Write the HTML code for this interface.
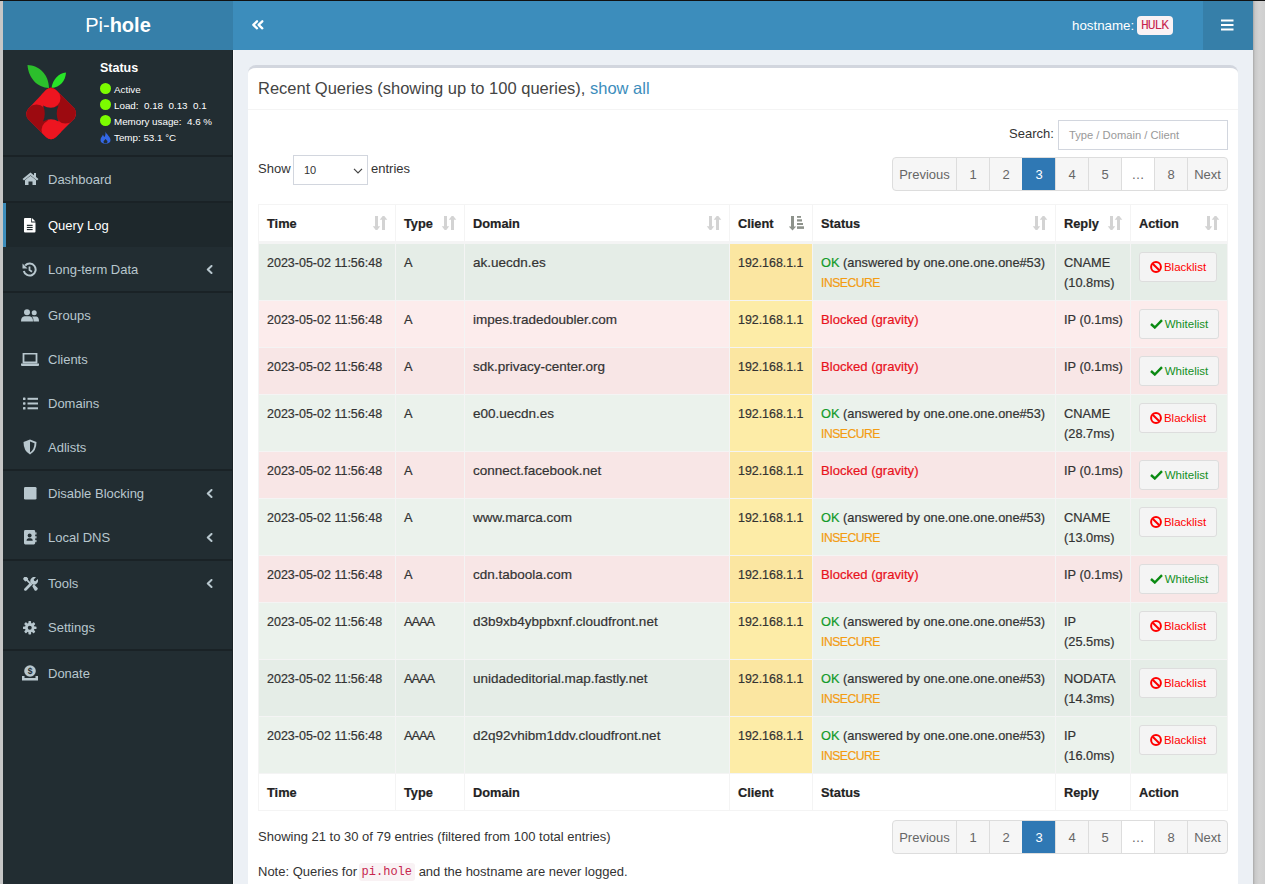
<!DOCTYPE html>
<html><head><meta charset="utf-8">
<style>
*{box-sizing:border-box;margin:0;padding:0}
html,body{width:1265px;height:884px;overflow:hidden}
body{position:relative;background:#ecf0f5;font-family:"Liberation Sans",sans-serif;color:#333;font-size:13px}
.abs{position:absolute}
svg{display:block}
#topline{left:0;top:0;width:1265px;height:1px;background:#111}
#lstrip{left:0;top:1px;width:3px;height:883px;background:#c6c6c6}
#rstrip{left:1253px;top:1px;width:12px;height:883px;background:linear-gradient(90deg,#a9a9a9 0,#c8c8c8 2px,#d3d3d3 6px,#cfcfcf 12px)}
#logo{left:3px;top:1px;width:230px;height:49px;background:#367fa9;color:#fff;text-align:center;font-size:20px;line-height:49px}
#navbar{left:233px;top:1px;width:970px;height:49px;background:#3c8dbc}
#burger{left:1203px;top:1px;width:50px;height:49px;background:#367fa9}
#sidebar{left:3px;top:50px;width:230px;height:834px;background:#222d32;border-right:1px solid #1a2226}
#cwhite{left:233px;top:50px;width:1px;height:834px;background:#f7f9fb}
#host{left:1072px;top:1px;height:49px;line-height:49px;color:#fff;font-size:13.3px}
#hulk{left:1137px;top:16px;width:36px;height:19px;background:#f9f2f4;border-radius:4px;color:#c7254e;font-family:"Liberation Mono",monospace;font-size:13px;letter-spacing:-1px;text-indent:-1px;line-height:19px;text-align:center}
/* sidebar */
.sep{left:3px;width:229px;height:2px;background:#1a2226}
.item{left:3px;width:229px;height:44px;color:#b8c7ce;font-size:13px;line-height:44px}
.item .t{position:absolute;left:45px;top:1px}
.item .ic{position:absolute;left:18px;top:14px;width:16px;height:16px}
.item .ch{position:absolute;left:202px;top:17px}
.item.active{background:#1e282c;color:#fff}
.item.active:before{content:"";position:absolute;left:0;top:0;width:3px;height:44px;background:#3c8dbc}
#status{left:100px;top:58px;color:#fff}
#status .h{font-weight:bold;font-size:13.5px;position:absolute;left:0;top:0;line-height:18px}
#status .l{position:absolute;left:0;font-size:10px;line-height:14px;white-space:pre}
#status .dot{display:inline-block;width:11px;height:11px;border-radius:50%;background:#7cfc00;vertical-align:-2px;margin-right:2px}
/* box */
#box{left:248px;top:65px;width:990px;height:830px;background:#fff;border-top:3px solid #d2d6de;border-radius:8px 8px 0 0}
#boxhdr{left:248px;top:68px;width:990px;height:42px;border-bottom:1px solid #f4f4f4}
#title{left:258px;top:77px;font-size:16.5px;line-height:22px;color:#444;white-space:nowrap}
#title a{color:#3c8dbc;text-decoration:none}
.lbl{font-size:13px;white-space:nowrap}
#search{left:1058px;top:120px;width:170px;height:30px;border:1px solid #d2d6de;color:#999;font-size:11.2px;line-height:28px;padding-left:10px}
.pag{height:34px;display:flex;border:1px solid #ddd;border-radius:4px;overflow:hidden;background:#f6f6f6}
.pag div{height:32px;line-height:34px;text-align:center;color:#666;font-size:13px;border-left:1px solid #ddd}
.pag div:first-child{border-left:0}
.pag div.cur{background:#2f78b4;color:#fff;border-left-color:#2f78b4}
.pag div.ell{background:#fff}
#sel{left:293px;top:155px;width:75px;height:30px;border:1px solid #d2d6de;font-size:11px;line-height:28px;padding-left:10px;color:#333}
/* table */
table{position:absolute;left:258px;top:204px;width:969px;-webkit-text-stroke:0.2px;border-collapse:collapse;table-layout:fixed;font-size:12.8px;line-height:20px}
th,td{border:1px solid #f4f4f4;padding:9px 8px 7px;vertical-align:top;text-align:left;white-space:nowrap;overflow:hidden}
thead th{border-bottom:3px solid #f4f4f4;font-weight:bold;color:#222;position:relative}
tfoot th{border-top:1px solid #f4f4f4;font-weight:bold;color:#222;padding-top:9px;padding-bottom:7px}
tr.ok td{background:#ebf2ec}
tr.bl td{background:#fcecec}
tr.bl.odd td{background:#f8e6e6}
tr.ok.odd td{background:#e5ede7}
td.cl{background:#fdeca7 !important}
tr.odd td.cl{background:#fbe6a1 !important}
.g{color:#129a2a}.r{color:#e8121c;font-size:13.1px}.o{color:#f39c12}
.btn{position:absolute;width:77px;height:30px;border:1px solid #ddd;border-radius:3px;background:#f4f4f4;font-size:11.5px;line-height:28px;text-align:center}
.btn.bk{color:#f00}.btn.wl{color:#14901e}
tbody td:nth-child(1){font-size:12.5px}tbody td:nth-child(2){letter-spacing:-1px}tbody td:nth-child(3){font-size:13.5px}td.cl{font-size:12.4px}.o{font-size:12.2px;letter-spacing:-0.5px}
.sort{position:absolute;right:7px;top:11px}
</style></head><body>
<div id="topline" class="abs"></div>
<div id="lstrip" class="abs"></div>
<div id="rstrip" class="abs"></div>
<div id="logo" class="abs">Pi-<b>hole</b></div>
<div id="navbar" class="abs"></div>
<div id="burger" class="abs"></div>
<div id="sidebar" class="abs"></div>
<div id="cwhite" class="abs"></div>

<!-- header content -->
<svg class="abs" style="left:251px;top:19px" width="13" height="12" viewBox="0 0 13 12"><path d="M6 2.3 L2.3 5.8 L6 9.3 M11.3 2.3 L7.6 5.8 L11.3 9.3" fill="none" stroke="#fff" stroke-width="2.3" stroke-linecap="round" stroke-linejoin="round"/></svg>
<div id="host" class="abs">hostname:</div>
<div id="hulk" class="abs">HULK</div>
<svg class="abs" style="left:1221px;top:19px" width="12.5" height="12" viewBox="0 0 13 12" preserveAspectRatio="none"><rect x="0" y="0.5" width="13" height="2" fill="#fff"/><rect x="0" y="5" width="13" height="2" fill="#fff"/><rect x="0" y="9.5" width="13" height="2" fill="#fff"/></svg>


<div class="abs sep" style="top:155px"></div>
<svg class="abs" style="left:26px;top:65px" width="51" height="76" viewBox="0 0 51 76">
<defs><clipPath id="dm"><path d="M25 22.5 Q27.5 22.5 30 25 L48.5 43.5 Q51.5 48.5 48.5 53.5 L30 72 Q25 76.5 20 72 L2 54 Q-1.5 49 2 44 L20 25 Q22.5 22.5 25 22.5 Z"/></clipPath></defs>
<path d="M1.5 0 C13 0.5 22.5 9 23 23 C11 22.5 2.5 13 1.5 0 Z" fill="#2cbf2c"/>
<path d="M25.5 23 C26.5 15 32.5 8 40 7.5 C39.5 16 34 22.5 25.5 23 Z" fill="#28e428"/>
<g clip-path="url(#dm)">
<rect x="-2" y="20" width="56" height="60" fill="#ed1520"/>
<path d="M0 50 A10.5 10.5 0 0 1 21 50 Q21.5 62 31 73 L20 82 L-6 56 Z" fill="#9c0a10"/>
<path d="M50 48 A10.5 10.5 0 0 1 29 48 Q28.5 36 19 25 L30 16 L56 42 Z" fill="#9c0a10"/>
<circle cx="24.5" cy="33" r="10" fill="#ed1520"/>
<circle cx="25.5" cy="65" r="10" fill="#ed1520"/>
</g>
<path d="M17 40.5 Q25 45 32.5 40.5 Q29 48.5 32.5 56.5 Q25 52 17 56.5 Q20.5 48.5 17 40.5 Z" fill="#222d32"/>
</svg>
<div class="abs" style="left:100px;top:59px;color:#fff;font-weight:bold;font-size:12.5px;line-height:18px">Status</div>
<div class="abs" style="left:100px;top:83px;width:11px;height:11px;border-radius:50%;background:#7cfc00"></div>
<div class="abs" style="left:100px;top:99px;width:11px;height:11px;border-radius:50%;background:#7cfc00"></div>
<div class="abs" style="left:100px;top:115px;width:11px;height:11px;border-radius:50%;background:#7cfc00"></div>
<svg class="abs" style="left:100px;top:131px" width="11" height="13" viewBox="0 0 11 13"><path d="M5.5 0.5 C6 3 10.5 5.5 10.5 9 C10.5 11.5 8.5 12.8 5.5 12.8 C2.5 12.8 0.5 11.5 0.5 9 C0.5 6.5 2.5 5 3 3.5 C3.5 5 4 6 4.5 6 C5.5 4.5 5.5 2.5 5.5 0.5 Z" fill="#3367e6"/><path d="M5.5 8 C6.5 9 7.5 9.8 7.5 10.8 C7.5 11.8 6.5 12.3 5.5 12.3 C4.5 12.3 3.5 11.8 3.5 10.8 C3.5 9.8 4.8 9 5.5 8 Z" fill="#222d32"/></svg>
<div class="abs" style="left:114px;top:81.5px;color:#fff;font-size:9.8px;line-height:16px;white-space:pre">Active</div>
<div class="abs" style="left:114px;top:97.5px;color:#fff;font-size:9.8px;line-height:16px;white-space:pre">Load:  0.18  0.13  0.1</div>
<div class="abs" style="left:114px;top:113.5px;color:#fff;font-size:9.8px;line-height:16px;white-space:pre">Memory usage:  4.6 %</div>
<div class="abs" style="left:114px;top:129.5px;color:#fff;font-size:9.8px;line-height:16px;white-space:pre">Temp: 53.1 °C</div>
<div class="abs item" style="top:157px"><span class="t">Dashboard</span></div>
<div class="abs" style="left:22px;top:172px"><svg width="17" height="13" viewBox="0 0 17 13"><path d="M8.5 0.5 L0.5 7 L2 8.5 L8.5 3.2 L15 8.5 L16.5 7 Z" fill="#b8c7ce"/><path d="M3 8 L8.5 3.8 L14 8 L14 13 L10.5 13 L10.5 9.5 L6.5 9.5 L6.5 13 L3 13 Z" fill="#b8c7ce"/><rect x="12" y="1" width="2" height="4" fill="#b8c7ce"/></svg></div>
<div class="abs item active" style="top:203px"><span class="t">Query Log</span></div>
<div class="abs" style="left:24px;top:218px"><svg width="11.5" height="14.5" viewBox="0 0 12 15"><path d="M0 1 Q0 0 1 0 L7.5 0 L7.5 4.5 L12 4.5 L12 14 Q12 15 11 15 L1 15 Q0 15 0 14 Z" fill="#fff"/><path d="M8.3 0 L12 3.7 L8.3 3.7 Z" fill="#fff"/><rect x="3" y="7" width="6" height="1.2" fill="#1e282c"/><rect x="3" y="9.2" width="6" height="1.2" fill="#1e282c"/><rect x="3" y="11.4" width="6" height="1.2" fill="#1e282c"/></svg></div>
<div class="abs item" style="top:247px"><span class="t">Long-term Data</span></div>
<div class="abs" style="left:22px;top:262px"><svg width="15" height="15" viewBox="0 0 15 15"><path d="M3.2 3.5 A6 6 0 1 1 1.8 9" fill="none" stroke="#b8c7ce" stroke-width="2"/><path d="M0.5 1.5 L0.5 6.5 L5.5 6.5 Z" fill="#b8c7ce"/><path d="M7.5 4.5 L7.5 8 L10 9.8" fill="none" stroke="#b8c7ce" stroke-width="1.8"/></svg></div>
<svg class="abs" style="left:206px;top:265px" width="7" height="9" viewBox="0 0 7 9"><path d="M5.5 1 L1.8 4.5 L5.5 8" fill="none" stroke="#b8c7ce" stroke-width="2" stroke-linecap="round" stroke-linejoin="round"/></svg>
<div class="abs item" style="top:293px"><span class="t">Groups</span></div>
<div class="abs" style="left:21px;top:309px"><svg width="18" height="13" viewBox="0 0 18 13"><circle cx="6" cy="3.2" r="3" fill="#b8c7ce"/><path d="M0 12.5 Q0 7.5 3.5 7.2 L8.5 7.2 Q12 7.5 12 12.5 Z" fill="#b8c7ce"/><circle cx="13.2" cy="3.8" r="2.5" fill="#b8c7ce"/><path d="M12.5 12.5 Q12.8 9 11 7.6 L15.5 7.6 Q18 8 18 12.5 Z" fill="#b8c7ce"/></svg></div>
<div class="abs item" style="top:337px"><span class="t">Clients</span></div>
<div class="abs" style="left:21px;top:353px"><svg width="18" height="13" viewBox="0 0 18 13"><path d="M2.5 0.5 L15.5 0.5 L15.5 9.5 L2.5 9.5 Z" fill="none" stroke="#b8c7ce" stroke-width="1.8"/><path d="M0 10.5 L18 10.5 L18 12 Q18 13 17 13 L1 13 Q0 13 0 12 Z" fill="#b8c7ce"/></svg></div>
<div class="abs item" style="top:381px"><span class="t">Domains</span></div>
<div class="abs" style="left:23px;top:397px"><svg width="15" height="13" viewBox="0 0 15 13"><rect x="0" y="0.5" width="2.5" height="2.5" rx="0.6" fill="#b8c7ce"/><rect x="0" y="5.2" width="2.5" height="2.5" rx="0.6" fill="#b8c7ce"/><rect x="0" y="10" width="2.5" height="2.5" rx="0.6" fill="#b8c7ce"/><rect x="4.5" y="0.8" width="10.5" height="2" fill="#b8c7ce"/><rect x="4.5" y="5.5" width="10.5" height="2" fill="#b8c7ce"/><rect x="4.5" y="10.3" width="10.5" height="2" fill="#b8c7ce"/></svg></div>
<div class="abs item" style="top:425px"><span class="t">Adlists</span></div>
<div class="abs" style="left:23px;top:439px"><svg width="14" height="16" viewBox="0 0 14 16"><path d="M7 0.5 L13.5 3 Q13.5 12 7 15.5 Q0.5 12 0.5 3 Z" fill="#b8c7ce"/><path d="M7 2.5 L11.5 4.3 Q11.3 11 7 13.4 Z" fill="#222d32"/></svg></div>
<div class="abs item" style="top:471px"><span class="t">Disable Blocking</span></div>
<div class="abs" style="left:24px;top:487px"><svg width="12.5" height="12.5" viewBox="0 0 14 14"><rect x="0" y="0" width="14" height="14" rx="1.5" fill="#b8c7ce"/></svg></div>
<svg class="abs" style="left:206px;top:489px" width="7" height="9" viewBox="0 0 7 9"><path d="M5.5 1 L1.8 4.5 L5.5 8" fill="none" stroke="#b8c7ce" stroke-width="2" stroke-linecap="round" stroke-linejoin="round"/></svg>
<div class="abs item" style="top:515px"><span class="t">Local DNS</span></div>
<div class="abs" style="left:24px;top:530px"><svg width="12.5" height="14.5" viewBox="0 0 14 16"><path d="M0 1.5 Q0 0 1.5 0 L11 0 Q12.5 0 12.5 1.5 L12.5 14.5 Q12.5 16 11 16 L1.5 16 Q0 16 0 14.5 Z" fill="#b8c7ce"/><rect x="12.5" y="2.5" width="1.5" height="2.5" fill="#b8c7ce"/><rect x="12.5" y="6.8" width="1.5" height="2.5" fill="#b8c7ce"/><rect x="12.5" y="11" width="1.5" height="2.5" fill="#b8c7ce"/><circle cx="6.3" cy="6" r="2.2" fill="#222d32"/><path d="M2.8 12 Q2.8 9 5 9 L7.6 9 Q9.8 9 9.8 12 Z" fill="#222d32"/></svg></div>
<svg class="abs" style="left:206px;top:533px" width="7" height="9" viewBox="0 0 7 9"><path d="M5.5 1 L1.8 4.5 L5.5 8" fill="none" stroke="#b8c7ce" stroke-width="2" stroke-linecap="round" stroke-linejoin="round"/></svg>
<div class="abs item" style="top:561px"><span class="t">Tools</span></div>
<div class="abs" style="left:23px;top:577px"><svg width="15" height="14" viewBox="0 0 15 14"><path d="M1 0.2 L0 2 L2.2 4.4 L3.6 4.1 L8 8.5 L9.3 7.2 L4.9 2.8 L5.2 1.4 L2.8 -0.8 Z" fill="#b8c7ce"/><path d="M9.2 8.9 L10.9 7.2 L14.4 10.7 Q15.2 11.7 14.4 12.6 L13.5 13.4 Q12.6 14.2 11.7 13.4 Z" fill="#b8c7ce"/><path d="M1.5 13.4 Q0.6 12.5 1.5 11.5 L7.4 5.6 L9.3 7.5 L3.4 13.4 Q2.4 14.3 1.5 13.4 Z" fill="#b8c7ce"/><path d="M7.6 5.6 A4.1 4.1 0 0 1 12.9 0.2 L10.7 2.4 L11.1 3.8 L12.5 4.2 L14.7 2 A4.1 4.1 0 0 1 9.3 7.3 Z" fill="#b8c7ce"/></svg></div>
<svg class="abs" style="left:206px;top:579px" width="7" height="9" viewBox="0 0 7 9"><path d="M5.5 1 L1.8 4.5 L5.5 8" fill="none" stroke="#b8c7ce" stroke-width="2" stroke-linecap="round" stroke-linejoin="round"/></svg>
<div class="abs item" style="top:605px"><span class="t">Settings</span></div>
<div class="abs" style="left:23px;top:621px"><svg width="13.5" height="13.5" viewBox="0 0 15 15"><g fill="#b8c7ce"><circle cx="7.5" cy="7.5" r="5.3"/><rect x="6" y="0" width="3" height="15" rx="0.8"/><rect x="0" y="6" width="15" height="3" rx="0.8"/><rect x="6" y="0" width="3" height="15" rx="0.8" transform="rotate(45 7.5 7.5)"/><rect x="6" y="0" width="3" height="15" rx="0.8" transform="rotate(-45 7.5 7.5)"/></g><circle cx="7.5" cy="7.5" r="2.2" fill="#222d32"/></svg></div>
<div class="abs item" style="top:651px"><span class="t">Donate</span></div>
<div class="abs" style="left:22px;top:665px"><svg width="16" height="16" viewBox="0 0 16 16"><circle cx="8" cy="6" r="5.8" fill="#b8c7ce"/><text x="8" y="9.2" font-size="8.5" font-family="Liberation Sans" font-weight="bold" text-anchor="middle" fill="#222d32">$</text><path d="M0 11 L2.5 11 L2.5 13 L13.5 13 L13.5 11 L16 11 L16 15.5 L0 15.5 Z" fill="#b8c7ce"/></svg></div>
<div class="abs sep" style="top:201px"></div>
<div class="abs sep" style="top:291px"></div>
<div class="abs sep" style="top:469px"></div>
<div class="abs sep" style="top:559px"></div>
<div class="abs sep" style="top:649px"></div>



<div id="box" class="abs"></div>
<div id="boxhdr" class="abs"></div>
<div id="title" class="abs">Recent Queries (showing up to 100 queries), <a>show all</a></div>
<div class="abs lbl" style="left:1009px;top:124px;line-height:20px">Search:</div>
<div id="search" class="abs">Type / Domain / Client</div>
<div class="abs lbl" style="left:258px;top:159px;line-height:20px">Show</div>
<div id="sel" class="abs">10<svg class="abs" style="left:59px;top:12px" width="10" height="6" viewBox="0 0 10 6"><path d="M1 0.8 L5 4.8 L9 0.8" fill="none" stroke="#444" stroke-width="1.2"/></svg></div>
<div class="abs lbl" style="left:371px;top:159px;line-height:20px">entries</div>
<div class="abs pag" style="left:892px;top:157px;width:336px"><div class="" style="width:63px">Previous</div><div class="" style="width:33px">1</div><div class="" style="width:33px">2</div><div class="cur" style="width:33px">3</div><div class="" style="width:33px">4</div><div class="" style="width:33px">5</div><div class="ell" style="width:33px">…</div><div class="" style="width:33px">8</div><div class="" style="width:40px">Next</div></div>
<table>
<colgroup><col style="width:137px"><col style="width:69px"><col style="width:265px"><col style="width:83px"><col style="width:243px"><col style="width:75px"><col style="width:97px"></colgroup>
<thead><tr style="height:38px"><th>Time <svg class="sort" width="16" height="15" viewBox="0 0 16 15"><path d="M3 0 H6 V10.2 H8.2 L5.3 14 H3.7 L0.8 10.2 H3 Z" fill="#d3d3d3"/><path d="M10 14 H13 V3.8 H15.3 L12.3 0 H10.7 L7.7 3.8 H10 Z" fill="#d3d3d3"/></svg></th><th>Type <svg class="sort" width="16" height="15" viewBox="0 0 16 15"><path d="M3 0 H6 V10.2 H8.2 L5.3 14 H3.7 L0.8 10.2 H3 Z" fill="#d3d3d3"/><path d="M10 14 H13 V3.8 H15.3 L12.3 0 H10.7 L7.7 3.8 H10 Z" fill="#d3d3d3"/></svg></th><th>Domain <svg class="sort" width="16" height="15" viewBox="0 0 16 15"><path d="M3 0 H6 V10.2 H8.2 L5.3 14 H3.7 L0.8 10.2 H3 Z" fill="#d3d3d3"/><path d="M10 14 H13 V3.8 H15.3 L12.3 0 H10.7 L7.7 3.8 H10 Z" fill="#d3d3d3"/></svg></th><th>Client <svg class="sort" width="16" height="15" viewBox="0 0 16 15"><path d="M2 0 L5 0 L5 10.5 L7.2 10.5 L3.5 14.5 L-0.2 10.5 L2 10.5 Z" fill="#8d928b"/><rect x="8" y="0" width="4" height="1.8" fill="#8d928b"/><rect x="8" y="3.3" width="5" height="2.2" fill="#8d928b"/><rect x="8" y="7" width="6" height="2" fill="#8d928b"/><rect x="8" y="10.3" width="7" height="2.6" fill="#8d928b"/></svg></th><th>Status <svg class="sort" width="16" height="15" viewBox="0 0 16 15"><path d="M3 0 H6 V10.2 H8.2 L5.3 14 H3.7 L0.8 10.2 H3 Z" fill="#d3d3d3"/><path d="M10 14 H13 V3.8 H15.3 L12.3 0 H10.7 L7.7 3.8 H10 Z" fill="#d3d3d3"/></svg></th><th>Reply <svg class="sort" width="16" height="15" viewBox="0 0 16 15"><path d="M3 0 H6 V10.2 H8.2 L5.3 14 H3.7 L0.8 10.2 H3 Z" fill="#d3d3d3"/><path d="M10 14 H13 V3.8 H15.3 L12.3 0 H10.7 L7.7 3.8 H10 Z" fill="#d3d3d3"/></svg></th><th>Action <svg class="sort" width="16" height="15" viewBox="0 0 16 15"><path d="M3 0 H6 V10.2 H8.2 L5.3 14 H3.7 L0.8 10.2 H3 Z" fill="#d3d3d3"/><path d="M10 14 H13 V3.8 H15.3 L12.3 0 H10.7 L7.7 3.8 H10 Z" fill="#d3d3d3"/></svg></th></tr></thead>
<tbody>
<tr class="ok odd" style="height:57px"><td>2023-05-02 11:56:48</td><td>A</td><td>ak.uecdn.es</td><td class="cl">192.168.1.1</td><td><span class="g">OK</span> (answered by one.one.one.one#53)<br><span class="o">INSECURE</span></td><td>CNAME<br>(10.8ms)</td><td></td></tr>
<tr class="bl" style="height:47px"><td>2023-05-02 11:56:48</td><td>A</td><td>impes.tradedoubler.com</td><td class="cl">192.168.1.1</td><td><span class="r">Blocked (gravity)</span></td><td>IP (0.1ms)</td><td></td></tr>
<tr class="bl odd" style="height:47px"><td>2023-05-02 11:56:48</td><td>A</td><td>sdk.privacy-center.org</td><td class="cl">192.168.1.1</td><td><span class="r">Blocked (gravity)</span></td><td>IP (0.1ms)</td><td></td></tr>
<tr class="ok" style="height:57px"><td>2023-05-02 11:56:48</td><td>A</td><td>e00.uecdn.es</td><td class="cl">192.168.1.1</td><td><span class="g">OK</span> (answered by one.one.one.one#53)<br><span class="o">INSECURE</span></td><td>CNAME<br>(28.7ms)</td><td></td></tr>
<tr class="bl odd" style="height:47px"><td>2023-05-02 11:56:48</td><td>A</td><td>connect.facebook.net</td><td class="cl">192.168.1.1</td><td><span class="r">Blocked (gravity)</span></td><td>IP (0.1ms)</td><td></td></tr>
<tr class="ok" style="height:57px"><td>2023-05-02 11:56:48</td><td>A</td><td>www.marca.com</td><td class="cl">192.168.1.1</td><td><span class="g">OK</span> (answered by one.one.one.one#53)<br><span class="o">INSECURE</span></td><td>CNAME<br>(13.0ms)</td><td></td></tr>
<tr class="bl odd" style="height:47px"><td>2023-05-02 11:56:48</td><td>A</td><td>cdn.taboola.com</td><td class="cl">192.168.1.1</td><td><span class="r">Blocked (gravity)</span></td><td>IP (0.1ms)</td><td></td></tr>
<tr class="ok" style="height:57px"><td>2023-05-02 11:56:48</td><td>AAAA</td><td>d3b9xb4ybpbxnf.cloudfront.net</td><td class="cl">192.168.1.1</td><td><span class="g">OK</span> (answered by one.one.one.one#53)<br><span class="o">INSECURE</span></td><td>IP<br>(25.5ms)</td><td></td></tr>
<tr class="ok odd" style="height:57px"><td>2023-05-02 11:56:48</td><td>AAAA</td><td>unidadeditorial.map.fastly.net</td><td class="cl">192.168.1.1</td><td><span class="g">OK</span> (answered by one.one.one.one#53)<br><span class="o">INSECURE</span></td><td>NODATA<br>(14.3ms)</td><td></td></tr>
<tr class="ok" style="height:57px"><td>2023-05-02 11:56:48</td><td>AAAA</td><td>d2q92vhibm1ddv.cloudfront.net</td><td class="cl">192.168.1.1</td><td><span class="g">OK</span> (answered by one.one.one.one#53)<br><span class="o">INSECURE</span></td><td>IP<br>(16.0ms)</td><td></td></tr>

</tbody>
<tfoot><tr style="height:37px"><th>Time</th><th>Type</th><th>Domain</th><th>Client</th><th>Status</th><th>Reply</th><th>Action</th></tr></tfoot>
</table>
<div class="abs btn bk" style="width:78px;left:1139px;top:252px"><svg style="display:inline-block;vertical-align:-2px;margin-right:2px" width="12" height="12" viewBox="0 0 12 12"><circle cx="6" cy="6" r="4.9" fill="none" stroke="#f00" stroke-width="2"/><path d="M2.7 2.7 L9.3 9.3" stroke="#f00" stroke-width="2"/></svg>Blacklist</div>
<div class="abs btn wl" style="width:80px;left:1139px;top:309px"><svg style="display:inline-block;vertical-align:-1px;margin-right:2px" width="13" height="10" viewBox="0 0 13 10"><path d="M1 5 L4.8 8.5 L12 1.2" fill="none" stroke="#0a8a12" stroke-width="2.4"/></svg>Whitelist</div>
<div class="abs btn wl" style="width:80px;left:1139px;top:356px"><svg style="display:inline-block;vertical-align:-1px;margin-right:2px" width="13" height="10" viewBox="0 0 13 10"><path d="M1 5 L4.8 8.5 L12 1.2" fill="none" stroke="#0a8a12" stroke-width="2.4"/></svg>Whitelist</div>
<div class="abs btn bk" style="width:78px;left:1139px;top:403px"><svg style="display:inline-block;vertical-align:-2px;margin-right:2px" width="12" height="12" viewBox="0 0 12 12"><circle cx="6" cy="6" r="4.9" fill="none" stroke="#f00" stroke-width="2"/><path d="M2.7 2.7 L9.3 9.3" stroke="#f00" stroke-width="2"/></svg>Blacklist</div>
<div class="abs btn wl" style="width:80px;left:1139px;top:460px"><svg style="display:inline-block;vertical-align:-1px;margin-right:2px" width="13" height="10" viewBox="0 0 13 10"><path d="M1 5 L4.8 8.5 L12 1.2" fill="none" stroke="#0a8a12" stroke-width="2.4"/></svg>Whitelist</div>
<div class="abs btn bk" style="width:78px;left:1139px;top:507px"><svg style="display:inline-block;vertical-align:-2px;margin-right:2px" width="12" height="12" viewBox="0 0 12 12"><circle cx="6" cy="6" r="4.9" fill="none" stroke="#f00" stroke-width="2"/><path d="M2.7 2.7 L9.3 9.3" stroke="#f00" stroke-width="2"/></svg>Blacklist</div>
<div class="abs btn wl" style="width:80px;left:1139px;top:564px"><svg style="display:inline-block;vertical-align:-1px;margin-right:2px" width="13" height="10" viewBox="0 0 13 10"><path d="M1 5 L4.8 8.5 L12 1.2" fill="none" stroke="#0a8a12" stroke-width="2.4"/></svg>Whitelist</div>
<div class="abs btn bk" style="width:78px;left:1139px;top:611px"><svg style="display:inline-block;vertical-align:-2px;margin-right:2px" width="12" height="12" viewBox="0 0 12 12"><circle cx="6" cy="6" r="4.9" fill="none" stroke="#f00" stroke-width="2"/><path d="M2.7 2.7 L9.3 9.3" stroke="#f00" stroke-width="2"/></svg>Blacklist</div>
<div class="abs btn bk" style="width:78px;left:1139px;top:668px"><svg style="display:inline-block;vertical-align:-2px;margin-right:2px" width="12" height="12" viewBox="0 0 12 12"><circle cx="6" cy="6" r="4.9" fill="none" stroke="#f00" stroke-width="2"/><path d="M2.7 2.7 L9.3 9.3" stroke="#f00" stroke-width="2"/></svg>Blacklist</div>
<div class="abs btn bk" style="width:78px;left:1139px;top:725px"><svg style="display:inline-block;vertical-align:-2px;margin-right:2px" width="12" height="12" viewBox="0 0 12 12"><circle cx="6" cy="6" r="4.9" fill="none" stroke="#f00" stroke-width="2"/><path d="M2.7 2.7 L9.3 9.3" stroke="#f00" stroke-width="2"/></svg>Blacklist</div>

<div class="abs lbl" style="left:258px;top:827px;line-height:20px">Showing 21 to 30 of 79 entries (filtered from 100 total entries)</div>
<div class="abs pag" style="left:892px;top:820px;width:336px"><div class="" style="width:63px">Previous</div><div class="" style="width:33px">1</div><div class="" style="width:33px">2</div><div class="cur" style="width:33px">3</div><div class="" style="width:33px">4</div><div class="" style="width:33px">5</div><div class="ell" style="width:33px">…</div><div class="" style="width:33px">8</div><div class="" style="width:40px">Next</div></div>
<div class="abs lbl" style="left:258px;top:862px;line-height:20px;font-size:13px">Note: Queries for <span style="display:inline-block;background:#f9f2f4;color:#c7254e;font-family:'Liberation Mono',monospace;font-size:12px;line-height:18px;padding:0 3px;border-radius:3px;vertical-align:1px;margin-left:-2px">pi.hole</span> and the hostname are never logged.</div>

</body></html>
